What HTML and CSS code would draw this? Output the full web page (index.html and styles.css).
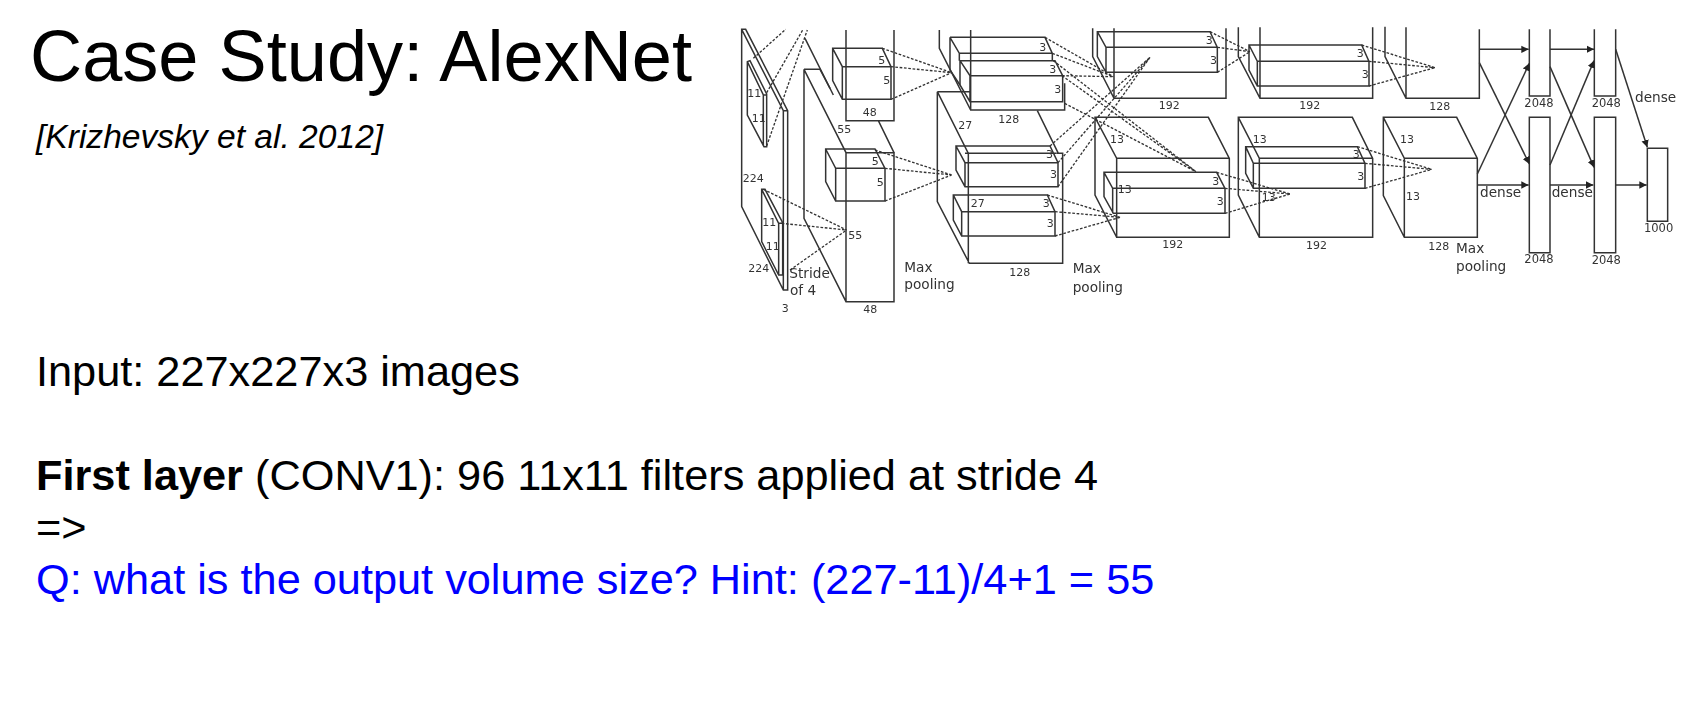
FILE: index.html
```html
<!DOCTYPE html>
<html lang="en">
<head>
  <meta charset="UTF-8">
  <meta name="viewport" content="width=device-width, initial-scale=1.0">
  <title>Case Study: AlexNet</title>
  <link rel="stylesheet" href="styles.css">
</head>
<body>

  <div class="top">
    <div class="heading">
      <h1>Case Study: AlexNet</h1>
      <p class="cite">[Krizhevsky et al. 2012]</p>
    </div>

    <!-- network diagram, drawn at 3x inside each group -->
    <svg class="figure" viewBox="0 0 969 300" width="969" height="300">
      <defs>
        <marker id="head" markerUnits="userSpaceOnUse" markerWidth="24" markerHeight="24" refX="22" refY="12" orient="auto">
          <path class="head" d="M0 1 L22 12 L0 23 Z"/>
        </marker>
      </defs>

      <g transform="scale(.33333)">
        <!-- input -->
        <path class="ln" d="M65 28H77L203 272V810H190L65 560ZM65 28L190 272V810M190 272H203"/>
        <path class="ln" d="M82 125L90 122L140 222V380H132L82 285ZM82 125L130 225V378M130 225H140"/>
        <path class="ln" d="M125 508H135L188 608V765H176L125 665ZM125 508L176 610V765M176 610H188"/>
        <path class="dash" d="M100 115L197 28M140 218L248 30M140 378L262 30M130 508L380 630M185 610L380 630M210 750L380 630"/>
        <text class="num" x="82" y="232">11</text>
        <text class="num" x="95" y="305">11</text>
        <text class="num" x="68" y="485">224</text>
        <text class="num" x="127" y="617">11</text>
        <text class="num" x="137" y="690">11</text>
        <text class="num" x="85" y="755">224</text>
        <text class="cap" x="208" y="775">Stride</text>
        <text class="cap" x="210" y="825">of 4</text>
        <text class="num" x="185" y="875">3</text>

        <!-- conv1 -->
        <path class="ln" d="M378 30V302H522V30M255 55L340 225M475 302L522 398"/>
        <path class="ln" d="M338 85H487L513 140V238H367L338 182ZM338 85L367 140H513M367 140V238"/>
        <path class="dash" d="M487 85L695 158M513 140L695 158M513 238L695 158"/>
        <path class="ln" d="M252 148H300L330 205M252 148V595L378 845H522V398H378ZM252 148L378 398V845"/>
        <path class="ln" d="M317 387H465L495 445V543H347L317 485ZM317 387L347 445H495M347 445V543"/>
        <path class="dash" d="M465 390L695 465M495 445L695 465M495 543L695 465"/>
        <text class="num" x="475" y="132">5</text>
        <text class="num" x="490" y="192">5</text>
        <text class="num" x="428" y="287">48</text>
        <text class="num" x="352" y="340">55</text>
        <text class="num" x="455" y="435">5</text>
        <text class="num" x="470" y="497">5</text>
        <text class="num" x="385" y="657">55</text>
        <text class="num" x="430" y="878">48</text>

        <!-- conv2 -->
        <path class="ln" d="M658 30V85L752 270H1034V190M752 30V270"/>
        <path class="ln" d="M690 52H975L997 100V122M690 52L718 100H997M690 52V150L720 195M718 100V122"/>
        <path class="ln" d="M720 122H1005L1028 167V245H750L720 195ZM720 122L750 167H1028M750 167V245"/>
        <path class="ln" d="M652 215V545L748 730H1028V400H1010M652 215H752M652 215L745 400V730M952 272L1015 400"/>
        <path class="ln" d="M708 378H990L1014 428V500H735L708 450ZM708 378L735 428H1014M735 428V500M735 400H1010"/>
        <path class="ln" d="M700 525H982L1005 575V648H725L700 600ZM700 525L725 575H1005M725 575V648"/>
        <text class="num" x="958" y="92">3</text>
        <text class="num" x="988" y="160">3</text>
        <text class="num" x="1003" y="220">3</text>
        <text class="num" x="835" y="308">128</text>
        <text class="num" x="715" y="328">27</text>
        <text class="num" x="978" y="415">3</text>
        <text class="num" x="990" y="475">3</text>
        <text class="num" x="752" y="562">27</text>
        <text class="num" x="968" y="562">3</text>
        <text class="num" x="980" y="622">3</text>
        <text class="num" x="868" y="768">128</text>
        <text class="cap" x="553" y="755">Max</text>
        <text class="cap" x="553" y="808">pooling</text>
      </g>

      <g transform="translate(330 0) scale(.33333)">
        <path class="dash" d="M-15 52L190 170M7 100L190 170M36 167L190 170M44 250L438 455M36 167L438 455M10 122L438 455M0 378L300 112M24 428L300 112M24 500L300 112M-8 525L210 592M15 575L210 592M15 648L210 592"/>

        <!-- conv3 -->
        <path class="ln" d="M128 25V110L192 235H528V25M192 25V235"/>
        <path class="ln" d="M142 35H480L502 82V157H168L142 110ZM142 35L168 82H502M168 82V157"/>
        <path class="dash" d="M480 35L600 95M502 82L600 95M502 157L600 95"/>
        <path class="ln" d="M135 292H475L538 415V652H200L135 525ZM135 292L200 415H538M200 415V652"/>
        <path class="ln" d="M162 457H500L525 505V580H190L162 530ZM162 457L188 505H525M188 505V580"/>
        <path class="dash" d="M500 457L720 522M525 505L720 522M525 580L720 522"/>
        <text class="num" x="467" y="72">3</text>
        <text class="num" x="480" y="132">3</text>
        <text class="num" x="326" y="266">192</text>
        <text class="num" x="180" y="368">13</text>
        <text class="num" x="487" y="495">3</text>
        <text class="num" x="203" y="520">13</text>
        <text class="num" x="500" y="555">3</text>
        <text class="num" x="337" y="685">192</text>

        <!-- conv4 -->
        <path class="ln" d="M565 22V110L630 235H968V22M630 22V235"/>
        <path class="ln" d="M597 75H935L957 124V198H622L597 150ZM597 75L622 124H957M622 124V198"/>
        <path class="dash" d="M935 75L1155 143M957 124L1155 143M957 198L1155 143"/>
        <path class="ln" d="M565 292H907L968 415V652H628L565 525ZM565 292L628 415H968M628 415V652"/>
        <path class="ln" d="M587 380H922L945 430V505H610L587 460ZM587 380L610 430H945M610 430V505"/>
        <path class="dash" d="M922 380L1145 448M945 430L1145 448M945 505L1145 448"/>
        <text class="num" x="920" y="112">3</text>
        <text class="num" x="935" y="175">3</text>
        <text class="num" x="748" y="268">192</text>
        <text class="num" x="608" y="370">13</text>
        <text class="num" x="908" y="415">3</text>
        <text class="num" x="922" y="480">3</text>
        <text class="num" x="635" y="543">13</text>
        <text class="num" x="768" y="688">192</text>
        <text class="cap" x="68" y="760">Max</text>
        <text class="cap" x="68" y="815">pooling</text>
      </g>

      <g transform="translate(650 0) scale(.33333)">
        <!-- conv5 -->
        <path class="ln" d="M45 20V110L108 235H328V28M108 22V235"/>
        <path class="ln" d="M40 292H260L322 415V652H103L40 527ZM40 292L103 415H322M103 415V652"/>
        <text class="num" x="178" y="270">128</text>
        <text class="num" x="90" y="370">13</text>
        <text class="num" x="108" y="540">13</text>
        <text class="num" x="175" y="690">128</text>
        <text class="cap" x="258" y="698">Max</text>
        <text class="cap" x="258" y="752">pooling</text>

        <!-- dense layers -->
        <path class="ln" d="M478 28V228H540V28M673 28V228H737V28M478 292H540V698H478ZM673 292H737V698H673ZM832 385H893V604H832Z"/>
        <path class="ln" marker-end="url(#head)" d="M328 88H476"/>
        <path class="ln" marker-end="url(#head)" d="M540 88H672"/>
        <path class="ln" marker-end="url(#head)" d="M328 128L478 432"/>
        <path class="ln" marker-end="url(#head)" d="M322 462L478 130"/>
        <path class="ln" marker-end="url(#head)" d="M322 495H476"/>
        <path class="ln" marker-end="url(#head)" d="M540 140L672 442"/>
        <path class="ln" marker-end="url(#head)" d="M540 435L672 122"/>
        <path class="ln" marker-end="url(#head)" d="M540 495H670"/>
        <path class="ln" marker-end="url(#head)" d="M737 88L832 382"/>
        <path class="ln" marker-end="url(#head)" d="M737 495H830"/>
        <text class="cap" x="330" y="532">dense</text>
        <text class="cap" x="545" y="532">dense</text>
        <text class="cap" x="795" y="247">dense</text>
        <text class="wide" x="463" y="260">2048</text>
        <text class="wide" x="665" y="260">2048</text>
        <text class="wide" x="463" y="730">2048</text>
        <text class="wide" x="665" y="733">2048</text>
        <text class="wide" x="822" y="636">1000</text>
      </g>
    </svg>
  </div>

  <div class="notes">
    <p>Input: 227x227x3 images</p>
    <p class="gap"><b>First layer</b> (CONV1): 96 11x11 filters applied at stride 4</p>
    <p>=&gt;</p>
    <p class="question">Q: what is the output volume size? Hint: (227-11)/4+1 = 55</p>
  </div>

</body>
</html>
```

FILE: styles.css
```css
body {
  font-family: "Liberation Sans", Arial, sans-serif;
  background-color: white;
  color: black;
  margin: 0;
  padding: 0;
}
.top {
  display: flex;
  padding-top: 20px;
  height: 300px;
}
.heading {
  width: 720px;
  padding-left: 30px;
  box-sizing: border-box;
}
h1 {
  font-size: 72.2px;
  font-weight: normal;
  line-height: 72px;
  margin: 0;
}
.cite {
  font-size: 33.6px;
  font-style: italic;
  line-height: 38px;
  margin: 26px 0 0 6px;
}
.figure {
  display: block;
  flex-shrink: 0;
  filter: blur(.4px);
}
.ln {
  fill: none;
  stroke: #333;
  stroke-width: 4.5;
}
.dash {
  fill: none;
  stroke: #333;
  stroke-width: 4;
  stroke-dasharray: 8 5;
}
.head {
  fill: #222;
}
.num, .wide, .cap {
  font-family: "DejaVu Sans", sans-serif;
  fill: #333;
}
.num {
  font-size: 33px;
}
.wide {
  font-size: 34.5px;
}
.cap {
  font-size: 41px;
}
.notes {
  padding: 25px 0 0 36px;
  font-size: 43.3px;
  line-height: 52px;
}
.notes p {
  margin: 0;
}
.notes .gap {
  margin-top: 52px;
}
.question {
  color: #0000ff;
}
```
